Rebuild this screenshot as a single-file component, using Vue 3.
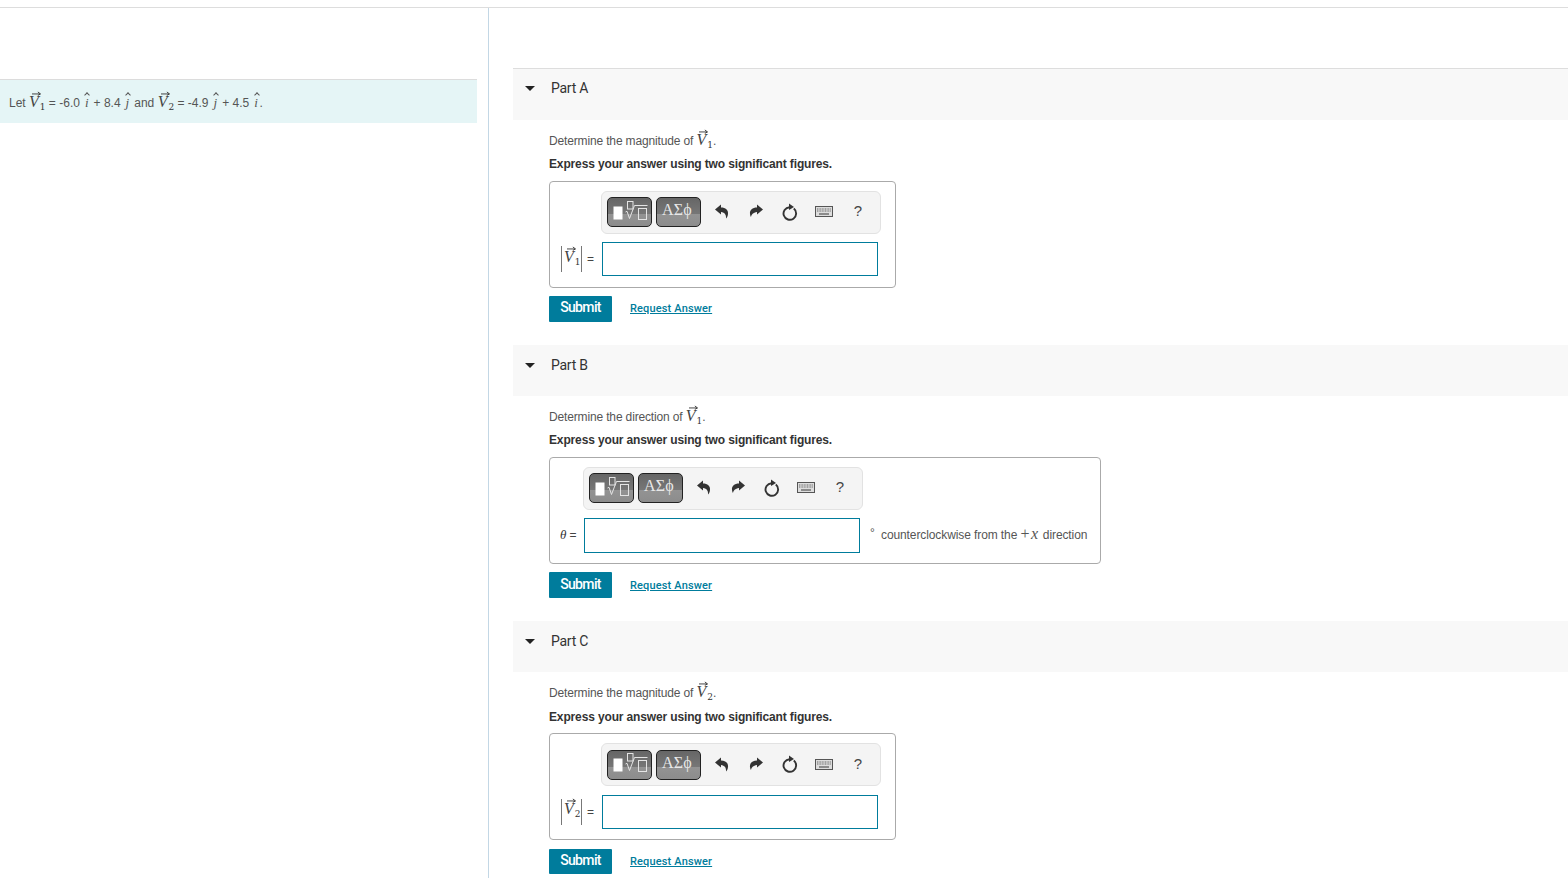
<script setup>
const parts = [
  { title: 'Part A', word: 'magnitude', sub: '1', kind: 'abs' },
  { title: 'Part B', word: 'direction', sub: '1', kind: 'angle' },
  { title: 'Part C', word: 'magnitude', sub: '2', kind: 'abs' }
]
</script>

<template>
  <div class="page">
    <div class="topline"></div>
    <div class="columns">
      <aside class="left">
        <div class="banner">
          Let
          <span class="vec"><i>V</i><svg class="arrow" viewBox="0 0 10 5"><path d="M0 3H9M6.5 .8L9.5 3 6.5 4.6" /></svg></span><span class="sub">1</span>
          = -6.0
          <span class="hat"><i>i</i></span>
          + 8.4
          <span class="hat"><i>j</i></span>
          and
          <span class="vec"><i>V</i><svg class="arrow" viewBox="0 0 10 5"><path d="M0 3H9M6.5 .8L9.5 3 6.5 4.6" /></svg></span><span class="sub">2</span>
          = -4.9
          <span class="hat"><i>j</i></span>
          + 4.5
          <span class="hat"><i>i</i></span>.
        </div>
      </aside>
      <main class="right">
        <section v-for="part in parts" :key="part.title" class="part">
          <header class="part-head">
            <span class="caret"></span>
            <span class="part-title">{{ part.title }}</span>
          </header>
          <div class="part-body">
            <p class="prompt">
              Determine the {{ part.word }} of
              <span class="vec"><i>V</i><svg class="arrow" viewBox="0 0 10 5"><path d="M0 3H9M6.5 .8L9.5 3 6.5 4.6" /></svg></span><span class="sub">{{ part.sub }}</span>.
            </p>
            <p class="express">Express your answer using two significant figures.</p>
            <div class="answer" :class="part.kind">
              <div class="editor">
                <div class="toolbar-row">
                  <div class="toolbar">
                    <span class="tbtn first">
                      <svg width="42" height="27" viewBox="0 0 42 27">
                        <rect x="4.500" y="7.500" width="9" height="13" fill="#fff" />
                        <rect x="18.500" y="2.500" width="5.500" height="7.500" fill="none" stroke="#e4e4e4" />
                        <path d="M16.500 13l1.500 -.7 2.500 7.200 5 -13h13" fill="none" stroke="#e4e4e4" />
                        <rect x="29.500" y="9.500" width="8" height="11" fill="none" stroke="#e4e4e4" />
                      </svg>
                    </span>
                    <span class="tbtn second">ΑΣϕ</span>
                    <span class="ticon">
                      <svg width="14" height="15" viewBox="0 0 14 15"><path d="M0 5.500L6 .5V3.500C10.500 3.500 13.500 6 13 10 12.800 12 12 13.500 11 14.500 11.300 11 10 8.500 6 8V10.500Z" fill="#333" /></svg>
                    </span>
                    <span class="ticon">
                      <svg width="14" height="15" viewBox="0 0 14 15"><path d="M14 5.500L8 .5V3.500C3.500 3.500 .5 6 1 10 1.200 11.500 1.600 12.500 2 13 2.500 10.500 4 8.500 8 8V10.500Z" fill="#333" /></svg>
                    </span>
                    <span class="ticon">
                      <svg width="16" height="18" viewBox="0 0 16 18"><path d="M11.800 5.600A6.300 6.300 0 1 1 7.500 4.200" fill="none" stroke="#333" stroke-width="1.900" /><path d="M7 .6L12 3.900 7 7Z" fill="#333" /></svg>
                    </span>
                    <span class="ticon">
                      <svg width="18" height="11" viewBox="0 0 18 11">
                        <rect x=".5" y=".5" width="17" height="10" fill="#ddd" stroke="#555" />
                        <path d="M2 3H16M2 5H16" stroke="#666" stroke-dasharray="1 .6" />
                        <path d="M4 8H14" stroke="#555" stroke-width="1.200" />
                      </svg>
                    </span>
                    <span class="ticon help">?</span>
                  </div>
                </div>
                <div class="input-row">
                  <span v-if="part.kind === 'abs'" class="label">
                    <span class="bar"></span>
                    <span class="vname"><span class="vec"><i>V</i><svg class="arrow" viewBox="0 0 10 5"><path d="M0 3H9M6.500 .8L9.500 3 6.500 4.600" /></svg></span><span class="sub">{{ part.sub }}</span></span>
                    <span class="bar"></span>
                    <span class="eq">=</span>
                  </span>
                  <span v-else class="label">
                    <i class="theta">θ</i>
                    <span class="eq theta-eq">=</span>
                  </span>
                  <div class="field"></div>
                </div>
              </div>
              <div v-if="part.kind === 'angle'" class="unit">
                <span class="deg">°</span>counterclockwise from the <span class="plus">+<i>x</i></span> direction
              </div>
            </div>
            <div class="actions">
              <button class="submit" type="button">Submit</button>
              <a class="reveal">Request Answer</a>
            </div>
          </div>
        </section>
      </main>
    </div>
  </div>
</template>

<style scoped>
.page {
  height: 878px;
  overflow: hidden;
  background: #fff;
  color: #333;
  font-family: "Liberation Sans", Arial, sans-serif;
  font-size: 12px;
}
.topline {
  height: 7px;
  border-bottom: 1px solid #ddd;
}
.columns {
  display: flex;
  height: 870px;
}
.left {
  width: 488px;
  flex: none;
  border-right: 1px solid #c3d7e5;
  padding-top: 71px;
}
.banner {
  width: 477px;
  height: 44px;
  box-sizing: border-box;
  border-top: 1px solid #dcdcdc;
  background: #e5f5f6;
  padding-left: 9px;
  line-height: 46px;
  white-space: nowrap;
  color: #555;
}
.right {
  flex: 1;
  min-width: 0;
  padding: 60.200px 0 0 24px;
}
.part {
  margin-bottom: 23px;
}
.part-head {
  height: 51.400px;
  box-sizing: border-box;
  background: #f8f8f8;
  display: flex;
  align-items: flex-start;
  padding-top: 13px;
}
.part:first-child .part-head {
  border-top: 1px solid #ddd;
  padding-top: 12px;
}
.caret {
  width: 0;
  height: 0;
  margin: 5px 0 0 12px;
  border-left: 5px solid transparent;
  border-right: 5px solid transparent;
  border-top: 5px solid #222;
}
.part-title {
  margin: -1px 0 0 16px;
  font-family: Roboto, sans-serif;
  font-size: 14px;
  line-height: 16px;
  letter-spacing: -.25px;
  color: #333;
}
.part-body {
  padding-left: 36px;
}
.prompt {
  margin: 10.100px 0 0;
  height: 20px;
  line-height: 22px;
  color: #555;
  letter-spacing: -.15px;
  white-space: nowrap;
}
.express {
  margin: 4.400px 0 0;
  height: 20px;
  line-height: 20px;
  font-weight: 700;
  letter-spacing: -.14px;
  color: #333;
}
.answer {
  margin-top: 6.500px;
  height: 107px;
  box-sizing: border-box;
  border: 1px solid #aaa;
  border-radius: 4px;
  padding: 9px 10px 0;
  display: flex;
}
.answer.abs {
  width: 347px;
}
.answer.angle {
  width: 552px;
}
.editor {
  flex: none;
}
.toolbar-row {
  display: flex;
}
.abs .toolbar-row {
  padding-left: 41px;
}
.angle .toolbar-row {
  padding-left: 23px;
}
.toolbar {
  width: 280px;
  height: 43px;
  box-sizing: border-box;
  border: 1px solid #e2e2e2;
  border-radius: 6px;
  background: #f4f4f4;
  display: flex;
  align-items: center;
  padding-left: 5px;
}
.tbtn {
  width: 45px;
  height: 30px;
  box-sizing: border-box;
  border: 1.500px solid #222;
  border-radius: 5px;
  background: linear-gradient(#666 0, #777 58%, #939393 58%, #8c8c8c 100%);
  display: flex;
  align-items: center;
  justify-content: center;
  flex: none;
}
.first svg {
  display: block;
}
.second {
  margin-left: 4px;
  font-family: "Liberation Serif", serif;
  font-size: 16px;
  color: #e8e8e8;
  padding: 0 3px 4px 0;
  letter-spacing: .3px;
}
.ticon {
  width: 34px;
  height: 30px;
  flex: none;
  display: flex;
  align-items: center;
  justify-content: center;
  padding-bottom: 1px;
  box-sizing: border-box;
}
.ticon:nth-child(3) {
  margin-left: 3.500px;
}
.help {
  font-size: 15px;
  color: #444;
  padding: 0 0 3px 1px;
}
.input-row {
  display: flex;
  align-items: center;
  margin-top: 8.200px;
}
.label {
  display: flex;
  align-items: center;
  flex: none;
  height: 34.500px;
  white-space: nowrap;
  font-size: 12px;
}
.abs .label {
  width: 42px;
  padding-left: 1px;
  box-sizing: border-box;
}
.angle .label {
  width: 24px;
}
.vname {
  display: block;
  line-height: 20px;
  margin: 0 1px 0 2px;
  padding-bottom: 3px;
  width: 16px;
}
.bar {
  width: 1px;
  height: 26px;
  background: #777;
  flex: none;
}
.eq {
  margin-left: 5px;
  color: #444;
}
.theta-eq {
  margin-left: 3px;
}
.theta {
  font-family: "Liberation Serif", serif;
  font-size: 13px;
}
.field {
  width: 276px;
  height: 34.500px;
  box-sizing: border-box;
  border: 1.500px solid #007c9c;
  background: #fff;
}
.unit {
  margin: 57px 0 0 7px;
  height: 20px;
  line-height: 20px;
  white-space: pre;
  color: #555;
  letter-spacing: -.1px;
}
.deg {
  display: inline-block;
  width: 11px;
  position: relative;
  top: -2px;
}
.plus {
  font-family: "Liberation Serif", serif;
  font-size: 16px;
  letter-spacing: 1.500px;
}
.actions {
  margin-top: 8.500px;
  display: flex;
  align-items: center;
}
.submit {
  width: 63px;
  height: 25.500px;
  border: 0;
  border-radius: 1px;
  background: #007c9c;
  color: #fff;
  font-family: Roboto, sans-serif;
  font-size: 14px;
  font-weight: 500;
  letter-spacing: -.65px;
  padding: 0 0 3px;
}
.reveal {
  margin-left: 18px;
  color: #007c9c;
  font-family: Roboto, sans-serif;
  font-size: 11px;
  font-weight: 500;
  letter-spacing: .15px;
  text-decoration: underline;
}
.vec {
  position: relative;
  display: inline-block;
  font-family: "Liberation Serif", serif;
  font-size: 16px;
  line-height: 15px;
  letter-spacing: 0;
  color: #444;
}
.arrow {
  position: absolute;
  left: 3px;
  top: -3px;
  width: 9px;
  height: 5px;
  fill: none;
  stroke: #333;
  stroke-width: 1;
}
.sub {
  font-family: "DejaVu Serif", serif;
  font-size: 9px;
  line-height: 1;
  position: relative;
  top: 3px;
  margin-left: 1px;
  letter-spacing: 0;
  color: #333;
}
.hat {
  position: relative;
  display: inline-block;
  font-family: "Liberation Serif", serif;
  font-size: 13px;
  width: 7px;
  text-align: center;
  line-height: 15px;
}
.hat::before {
  content: "";
  position: absolute;
  left: 2px;
  top: -2px;
  width: 3px;
  height: 3px;
  border-left: 1px solid #555;
  border-top: 1px solid #555;
  transform: rotate(45deg);
}
</style>

<style>
html, body {
  margin: 0;
  background: #fff;
}
</style>
